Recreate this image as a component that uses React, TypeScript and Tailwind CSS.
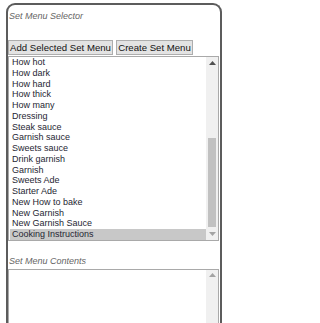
import React from "react";

const items = [
  "How hot",
  "How dark",
  "How hard",
  "How thick",
  "How many",
  "Dressing",
  "Steak sauce",
  "Garnish sauce",
  "Sweets sauce",
  "Drink garnish",
  "Garnish",
  "Sweets Ade",
  "Starter Ade",
  "New How to bake",
  "New Garnish",
  "New Garnish Sauce",
  "Cooking Instructions",
];

function Arrow({ up, dark }: { up: boolean; dark: boolean }) {
  return (
    <div className="h-[11px] flex items-center justify-center">
      <svg width="7" height="4" viewBox="0 0 7 4">
        <polygon
          points={up ? "0,4 7,4 3.5,0" : "0,0 7,0 3.5,4"}
          fill={dark ? "#505050" : "#a3a3a3"}
        />
      </svg>
    </div>
  );
}

function FakeScrollbar({ thumb }: { thumb: boolean }) {
  return (
    <div className="w-[12px] bg-[#f0f0f0] flex flex-col shrink-0">
      <Arrow up dark={thumb} />
      {thumb ? (
        <div className="flex-1 flex flex-col px-[1px]">
          <div className="h-[70px]" />
          <div className="h-[89px] mx-[1px] bg-[#c1c1c1]" />
        </div>
      ) : (
        <div className="flex-1" />
      )}
      {thumb && <Arrow up={false} dark={false} />}
    </div>
  );
}

export default function App() {
  return (
    <div
      className="w-[229px] h-[323px] overflow-hidden bg-white"
      style={{ fontFamily: '"Liberation Sans", Arial, sans-serif' }}
    >
      <div className="ml-[6px] mt-[3px] w-[216px] h-[330px] border-2 border-b-0 border-[#5c5c5c] rounded-t-[9px] flex flex-col">
        {/* ── Selector ───────────────────────────────────── */}
        <p className="mt-[6px] pl-[1px] h-[11px] text-[9px] leading-[11px] italic text-[#666]">
          Set Menu Selector
        </p>

        <div className="mt-[18px] flex gap-[3px]">
          <button className="h-[15px] w-[105px] border border-[#adadad] bg-[#e3e3e3] text-[9.6px] leading-[13px] text-[#111] whitespace-nowrap">
            Add Selected Set Menu
          </button>
          <button className="h-[15px] w-[77px] border border-[#adadad] bg-[#e3e3e3] text-[9.6px] leading-[13px] text-[#111] whitespace-nowrap">
            Create Set Menu
          </button>
        </div>

        <div className="mt-[1px] w-[211px] h-[185px] border border-[#a9a9a9] flex">
          <div className="flex-1 flex flex-col pl-[1px]">
            {items.map((it, i) => (
              <div
                key={`it-${i}`}
                className={`h-[10.75px] pl-[2px] text-[9px] leading-[10.75px] text-[#262633] whitespace-nowrap ${
                  i === items.length - 1 ? "bg-[#c8c8c8]" : ""
                }`}
              >
                {it}
              </div>
            ))}
          </div>
          <FakeScrollbar thumb />
        </div>

        {/* ── Contents ───────────────────────────────────── */}
        <p className="mt-[15px] pl-[1px] h-[11px] text-[9px] leading-[11px] italic text-[#666]">
          Set Menu Contents
        </p>
        <div className="mt-[2px] w-[211px] h-[80px] border border-[#a9a9a9] flex">
          <div className="flex-1" />
          <FakeScrollbar thumb={false} />
        </div>
      </div>
    </div>
  );
}
